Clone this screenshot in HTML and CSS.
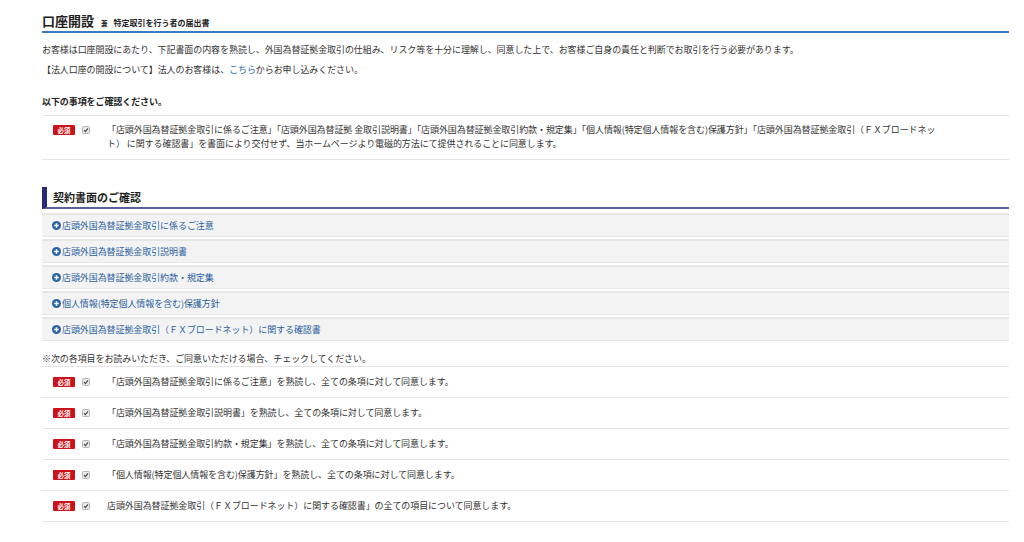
FILE: index.html
```html
<!DOCTYPE html>
<html lang="ja">
<head>
<meta charset="utf-8">
<link rel="stylesheet" href="styles.css">
</head>
<body>
<div class="page">
  <h1 class="title"><span class="title-main">口座開設</span><span class="title-and">兼</span><span class="title-sub">特定取引を行う者の届出書</span></h1>
  <p class="para">お客様は口座開設にあたり、下記書面の内容を熟読し、外国為替証拠金取引の仕組み、リスク等を十分に理解し、同意した上で、お客様ご自身の責任と判断でお取引を行う必要があります。</p>
  <p class="para">【法人口座の開設について】法人のお客様は、<a class="link" href="#">こちら</a>からお申し込みください。</p>
  <h3 class="confirm">以下の事項をご確認ください。</h3>
  <ul class="rows">
    <li class="row">
      <span class="badge">必須</span>
      <svg class="check" width="8" height="8" viewBox="0 0 8 8"><rect x="0.5" y="0.5" width="7" height="7" rx="1" fill="#e9e9e9" stroke="#b5b5b5"/><path d="M2 4.2 L3.4 5.6 L6 2.4" fill="none" stroke="#444" stroke-width="1.1"/></svg>
      <span class="row-text wide">「店頭外国為替証拠金取引に係るご注意」「店頭外国為替証拠 金取引説明書」「店頭外国為替証拠金取引約款・規定集」「個人情報(特定個人情報を含む)保護方針」「店頭外国為替証拠金取引（ＦＸブロードネット） に関する確認書」を書面により交付せず、当ホームページより電磁的方法にて提供されることに同意します。</span>
    </li>
  </ul>

  <h2 class="section">契約書面のご確認</h2>
  <div class="docs">
    <div class="doc"><svg class="plus" width="9" height="9" viewBox="0 0 9 9"><circle cx="4.5" cy="4.5" r="4.5" fill="#2b63a3"/><path d="M4.5 2.2 V6.8 M2.2 4.5 H6.8" stroke="#fff" stroke-width="1.5"/></svg>店頭外国為替証拠金取引に係るご注意</div>
    <div class="doc"><svg class="plus" width="9" height="9" viewBox="0 0 9 9"><circle cx="4.5" cy="4.5" r="4.5" fill="#2b63a3"/><path d="M4.5 2.2 V6.8 M2.2 4.5 H6.8" stroke="#fff" stroke-width="1.5"/></svg>店頭外国為替証拠金取引説明書</div>
    <div class="doc"><svg class="plus" width="9" height="9" viewBox="0 0 9 9"><circle cx="4.5" cy="4.5" r="4.5" fill="#2b63a3"/><path d="M4.5 2.2 V6.8 M2.2 4.5 H6.8" stroke="#fff" stroke-width="1.5"/></svg>店頭外国為替証拠金取引約款・規定集</div>
    <div class="doc"><svg class="plus" width="9" height="9" viewBox="0 0 9 9"><circle cx="4.5" cy="4.5" r="4.5" fill="#2b63a3"/><path d="M4.5 2.2 V6.8 M2.2 4.5 H6.8" stroke="#fff" stroke-width="1.5"/></svg>個人情報(特定個人情報を含む)保護方針</div>
    <div class="doc"><svg class="plus" width="9" height="9" viewBox="0 0 9 9"><circle cx="4.5" cy="4.5" r="4.5" fill="#2b63a3"/><path d="M4.5 2.2 V6.8 M2.2 4.5 H6.8" stroke="#fff" stroke-width="1.5"/></svg>店頭外国為替証拠金取引（ＦＸブロードネット）に関する確認書</div>
  </div>

  <p class="note">※次の各項目をお読みいただき、ご同意いただける場合、チェックしてください。</p>
  <ul class="rows">
    <li class="row single">
      <span class="badge">必須</span>
      <svg class="check" width="8" height="8" viewBox="0 0 8 8"><rect x="0.5" y="0.5" width="7" height="7" rx="1" fill="#e9e9e9" stroke="#b5b5b5"/><path d="M2 4.2 L3.4 5.6 L6 2.4" fill="none" stroke="#444" stroke-width="1.1"/></svg>
      <span class="row-text">「店頭外国為替証拠金取引に係るご注意」を熟読し、全ての条項に対して同意します。</span>
    </li>
    <li class="row single">
      <span class="badge">必須</span>
      <svg class="check" width="8" height="8" viewBox="0 0 8 8"><rect x="0.5" y="0.5" width="7" height="7" rx="1" fill="#e9e9e9" stroke="#b5b5b5"/><path d="M2 4.2 L3.4 5.6 L6 2.4" fill="none" stroke="#444" stroke-width="1.1"/></svg>
      <span class="row-text">「店頭外国為替証拠金取引説明書」を熟読し、全ての条項に対して同意します。</span>
    </li>
    <li class="row single">
      <span class="badge">必須</span>
      <svg class="check" width="8" height="8" viewBox="0 0 8 8"><rect x="0.5" y="0.5" width="7" height="7" rx="1" fill="#e9e9e9" stroke="#b5b5b5"/><path d="M2 4.2 L3.4 5.6 L6 2.4" fill="none" stroke="#444" stroke-width="1.1"/></svg>
      <span class="row-text">「店頭外国為替証拠金取引約款・規定集」を熟読し、全ての条項に対して同意します。</span>
    </li>
    <li class="row single">
      <span class="badge">必須</span>
      <svg class="check" width="8" height="8" viewBox="0 0 8 8"><rect x="0.5" y="0.5" width="7" height="7" rx="1" fill="#e9e9e9" stroke="#b5b5b5"/><path d="M2 4.2 L3.4 5.6 L6 2.4" fill="none" stroke="#444" stroke-width="1.1"/></svg>
      <span class="row-text">「個人情報(特定個人情報を含む)保護方針」を熟読し、全ての条項に対して同意します。</span>
    </li>
    <li class="row single">
      <span class="badge">必須</span>
      <svg class="check" width="8" height="8" viewBox="0 0 8 8"><rect x="0.5" y="0.5" width="7" height="7" rx="1" fill="#e9e9e9" stroke="#b5b5b5"/><path d="M2 4.2 L3.4 5.6 L6 2.4" fill="none" stroke="#444" stroke-width="1.1"/></svg>
      <span class="row-text">店頭外国為替証拠金取引（ＦＸブロードネット）に関する確認書」の全ての項目について同意します。</span>
    </li>
  </ul>
</div>
</body>
</html>
```

FILE: styles.css
```css
* { box-sizing: border-box; }
html, body { margin: 0; padding: 0; background: #fff; }
body {
  font-family: "Noto Sans CJK JP", "Noto Sans", sans-serif;
  font-size: 9px;
  color: #333;
  letter-spacing: -0.08px;
}
.page {
  padding: 10px 15px 20px 42px;
}
.title {
  margin: 0;
  height: 23px;
  line-height: 21px;
  border-bottom: 2px solid #3a7cc1;
  display: flex;
  align-items: baseline;
  color: #222;
}
.title-main { font-size: 13px; font-weight: bold; letter-spacing: 0; }
.title-and { font-size: 6.5px; font-weight: bold; margin-left: 7px; }
.title-sub { font-size: 8px; font-weight: bold; margin-left: 6px; letter-spacing: 0; }
.para {
  margin: 0;
  line-height: 20px;
}
.title + .para { margin-top: 7px; }
.link { color: #2f6db5; text-decoration: none; }
.confirm {
  margin: 12px 0 3px;
  font-size: 9px;
  line-height: 20px;
  font-weight: bold;
  color: #222;
}
.rows {
  list-style: none;
  margin: 0;
  padding: 0;
  border-top: 1px solid #e4e4e4;
}
.row {
  display: flex;
  align-items: flex-start;
  padding: 7px 0 8px 11px;
  border-bottom: 1px solid #e4e4e4;
  line-height: 14px;
}
.row.single { padding: 8px 0 8px 11px; }
.badge {
  flex: none;
  width: 22px;
  height: 10px;
  margin-top: 2px;
  background: #cc1119;
  color: #fff;
  font-size: 6.5px;
  font-weight: bold;
  line-height: 10px;
  text-align: center;
  border-radius: 1px;
  letter-spacing: 0;
}
.check {
  flex: none;
  margin: 3px 0 0 7px;
}
.row-text {
  margin-left: 17px;
}
.row-text.wide { max-width: 830px; }
.section {
  margin: 27px 0 0;
  height: 22px;
  line-height: 20px;
  font-size: 11px;
  font-weight: bold;
  color: #222;
  border-left: 5px solid #262a78;
  border-bottom: 2px solid #5b5f9e;
  padding-left: 6px;
  letter-spacing: 0;
}
.docs {
  margin-top: 4px;
  display: flex;
  flex-direction: column;
  gap: 2px;
}
.doc {
  height: 24px;
  display: flex;
  align-items: center;
  padding-left: 10px;
  background: #f3f3f3;
  border-top: 2px solid #e6e6e6;
  border-bottom: 1px solid #e6e6e6;
  color: #2b5f9e;
}
.plus { flex: none; margin-right: 1px; }
.note {
  margin: 10px 0 0;
  line-height: 15px;
}
```
